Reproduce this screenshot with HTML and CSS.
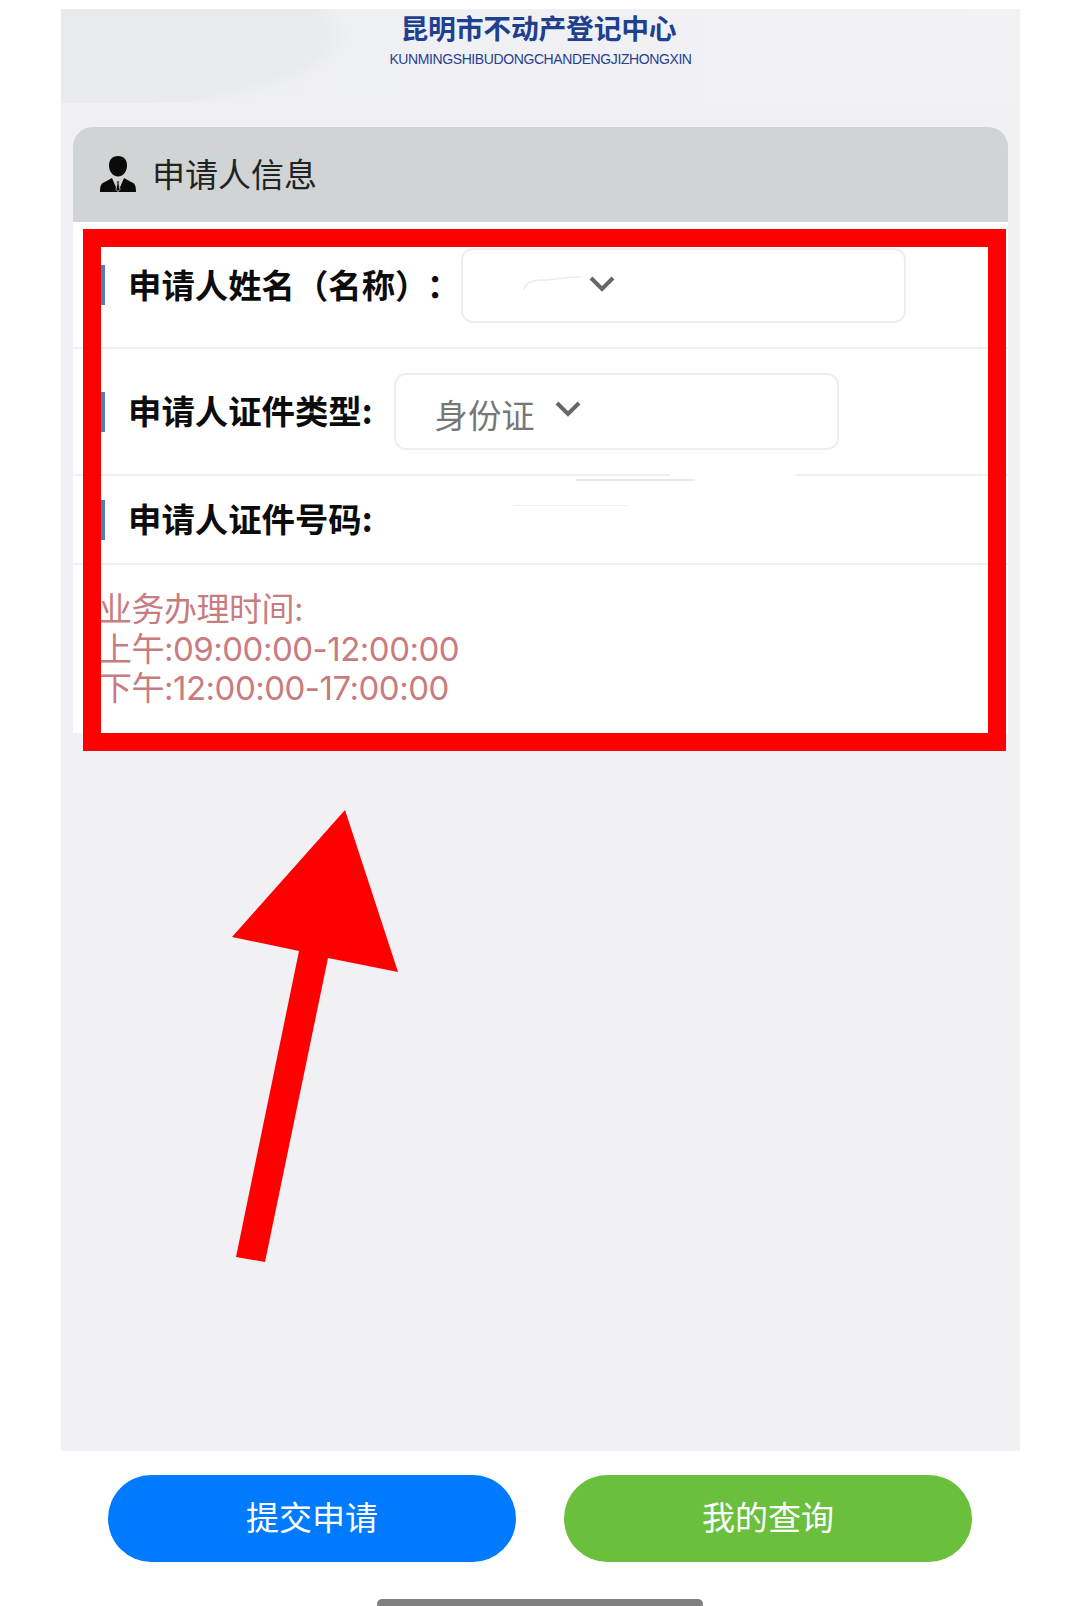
FILE: index.html
```html
<!DOCTYPE html>
<html lang="zh-CN">
<head>
    <meta charset="UTF-8">
    <meta name="viewport" content="width=device-width, initial-scale=1.0">
    <title>申请人信息</title>
    <link rel="stylesheet" href="styles.css">
</head>
<body>
    <div class="frame">
        <div class="banner">
            <div class="banner-title">昆明市不动产登记中心</div>
            <div class="banner-sub">KUNMINGSHIBUDONGCHANDENGJIZHONGXIN</div>
        </div>

        <div class="panel">
            <div class="panel-header">
                <svg class="person-icon" viewBox="0 0 36 36">
                    <path d="M18 0c-6 0-9 4-9 9.500 0 5.500 3.500 11 9 11s9-5.500 9-11C27 4 24 0 18 0z" fill="#0a0a0a"/>
                    <path d="M12 22L2 27.500C0.500 29 0 32 0 36h36c0-4-.5-7-2-8.500L24 22l-6 14z" fill="#0a0a0a"/>
                    <path d="M16.500 25h3l-.6 2.500 1.100 6-2 2-2-2 1.100-6z" fill="#0a0a0a" stroke="#d0d4d5" stroke-width=".8"/>
                </svg>
                <span>申请人信息</span>
            </div>

            <div class="panel-body">
                <div class="row row-name">
                    <label class="row-label">申请人姓名（名称）<span class="colon">：</span></label>
                    <div class="select select-name">
                        <svg class="smudge" viewBox="0 0 60 20"><path d="M1 16C2 8 10 6 20 6c12 0 18-3 38-3" fill="none" stroke="#e9ecef" stroke-width="1.500"/></svg>
                        <svg class="chevron" viewBox="0 0 26 16"><path d="M2 2l11 11L24 2" fill="none" stroke="#666" stroke-width="4"/></svg>
                    </div>
                </div>

                <div class="row row-type">
                    <label class="row-label">申请人证件类型:</label>
                    <div class="select select-type">
                        <span class="select-value">身份证</span>
                        <svg class="chevron" viewBox="0 0 26 16"><path d="M2 2l11 11L24 2" fill="none" stroke="#666" stroke-width="4"/></svg>
                    </div>
                </div>

                <div class="row row-number">
                    <label class="row-label">申请人证件号码:</label>
                    <div class="erased"></div>
                </div>

                <div class="note">
                    <div>业务办理时间:</div>
                    <div>上午:09:00:00-12:00:00</div>
                    <div>下午:12:00:00-17:00:00</div>
                </div>
            </div>
        </div>
    </div>

    <div class="actions">
        <button class="btn btn-blue">提交申请</button>
        <button class="btn btn-green">我的查询</button>
    </div>
    <div class="home-bar"></div>

    <!-- annotation drawn over the screenshot -->
    <div class="mark-box"></div>
    <svg class="mark-arrow" viewBox="0 0 1080 1606">
        <path d="M345 810L232 937L299 951L236 1257L265 1262L328 958L398 972z" fill="#ff0000"/>
    </svg>
</body>
</html>
```

FILE: styles.css
```css
* {
    margin: 0;
    padding: 0;
    box-sizing: border-box;
    font-family: "Noto Sans CJK SC", "Liberation Sans", sans-serif;
}

body {
    position: relative;
    width: 1080px;
    height: 1606px;
    overflow: hidden;
    background: #fff;
}

.frame {
    width: 959px;
    height: 1442px;
    margin: 9px 0 0 61px;
    background: #f0f0f5;
}

.banner {
    height: 94px;
    text-align: center;
    background:
        radial-gradient(ellipse 290px 80px at 0 25px, #e9eaee 90%, rgba(233,234,238,0) 100%),
        linear-gradient(90deg, #eeeff3 0%, #f2f2f6 100%);
}

.banner-title {
    padding-right: 4px;
    color: #1f3f8f;
    font-size: 27.800px;
    font-weight: 700;
    line-height: 36px;
    letter-spacing: -0.2px;
}

.banner-sub {
    margin-top: 6px;
    color: #27408f;
    font-family: "Liberation Sans", sans-serif;
    font-size: 14px;
    line-height: 16px;
    letter-spacing: -0.4px;
}

.panel {
    width: 935px;
    margin: 24px 0 0 12px;
}

.panel-header {
    display: flex;
    align-items: center;
    gap: 16px;
    height: 95px;
    padding: 0 0 4px 27px;
    color: #222;
    font-size: 33px;
    background: #d0d4d5;
    border-radius: 20px 20px 0 0;
}

.person-icon {
    width: 36px;
    height: 36px;
    margin-top: 3px;
}

.panel-body {
    padding-top: 1px;
    background: #fff;
}

.row {
    position: relative;
    display: flex;
    align-items: center;
    padding-left: 28px;
    border-bottom: 2px solid #f0f0f3;
}

.row::before {
    content: "";
    flex: none;
    width: 4px;
    height: 40px;
    margin-right: 23px;
    background: #4f7cc4;
}

.row-name {
    height: 126px;
}

.row-type {
    height: 127px;
}

.row-number {
    height: 89px;
}

.row-label {
    padding-bottom: 3px;
    color: #0c0c0c;
    font-size: 33.400px;
    font-weight: 700;
    line-height: 44px;
    white-space: nowrap;
}

.colon {
    margin-left: 15px;
    font-family: "Noto Sans CJK TC", sans-serif;
}

.select {
    display: flex;
    align-items: flex-start;
    width: 445px;
    background: #fff;
    border: 2px solid #eceef0;
    border-radius: 12px;
}

.select-name {
    height: 75px;
    margin-left: 1px;
}

.select-type {
    height: 77px;
    margin-left: 21px;
}

.select-value {
    margin: 17px 0 0 39px;
    color: #777;
    font-size: 33.400px;
    line-height: 44px;
}

.chevron {
    width: 26px;
    height: 16px;
}

.select-name .chevron {
    margin: 26px 0 0 0;
}

.select-type .chevron {
    margin: 26px 0 0 20px;
}

.smudge {
    width: 60px;
    height: 20px;
    margin: 24px 6px 0 60px;
}

/* wiped part of the id number: cuts the divider above, leaves two faint lines */
.erased {
    position: absolute;
    top: -3px;
    left: 597px;
    width: 126px;
    height: 4px;
    background: #fff;
}

.erased::before {
    content: "";
    position: absolute;
    top: 6px;
    left: -94px;
    width: 119px;
    height: 2px;
    background: #e6e8ea;
}

.erased::after {
    content: "";
    position: absolute;
    top: 32px;
    left: -156px;
    width: 114px;
    height: 1px;
    background: #eeeff1;
}

.note {
    height: 168px;
    padding: 25px 0 0 26px;
    color: #c97c80;
}

.note div {
    font-family: Inter, "Noto Sans CJK SC", sans-serif;
    font-size: 33px;
    line-height: 39.500px;
    letter-spacing: -0.5px;
}

.actions {
    display: flex;
    gap: 48px;
    padding: 24px 0 0 108px;
}

.btn {
    width: 408px;
    height: 87px;
    padding-bottom: 6px;
    border: none;
    border-radius: 44px;
    color: #fff;
    font-size: 33px;
}

.btn-blue {
    background: #007aff;
}

.btn-green {
    background: #6abf3c;
}

.home-bar {
    position: absolute;
    left: 377px;
    bottom: 0;
    width: 326px;
    height: 7px;
    background: #808080;
    border-radius: 5px 5px 0 0;
}

.mark-box {
    position: absolute;
    top: 229px;
    left: 83px;
    width: 923px;
    height: 522px;
    border: 18px solid #ff0000;
}

.mark-arrow {
    position: absolute;
    top: 0;
    left: 0;
    width: 1080px;
    height: 1606px;
}
```
